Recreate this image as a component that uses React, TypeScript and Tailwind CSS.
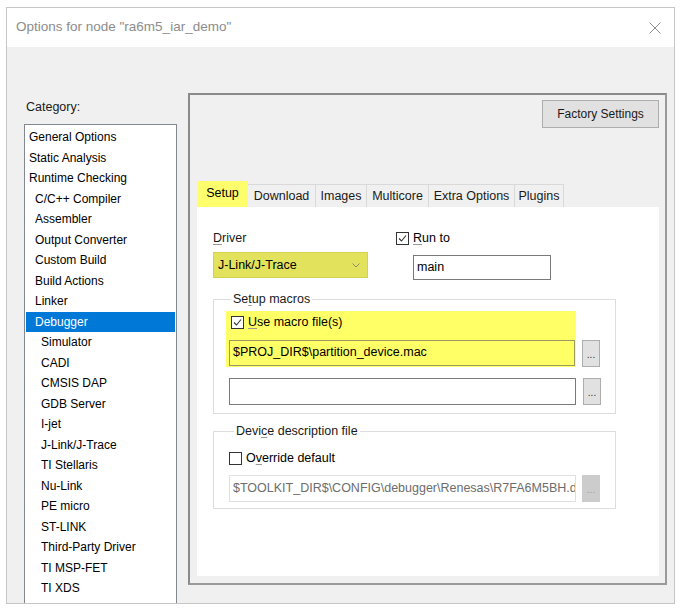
import React from "react"

const CATEGORIES: { label: string; level: number }[] = [
  { label: "General Options", level: 0 },
  { label: "Static Analysis", level: 0 },
  { label: "Runtime Checking", level: 0 },
  { label: "C/C++ Compiler", level: 1 },
  { label: "Assembler", level: 1 },
  { label: "Output Converter", level: 1 },
  { label: "Custom Build", level: 1 },
  { label: "Build Actions", level: 1 },
  { label: "Linker", level: 1 },
  { label: "Debugger", level: 1 },
  { label: "Simulator", level: 2 },
  { label: "CADI", level: 2 },
  { label: "CMSIS DAP", level: 2 },
  { label: "GDB Server", level: 2 },
  { label: "I-jet", level: 2 },
  { label: "J-Link/J-Trace", level: 2 },
  { label: "TI Stellaris", level: 2 },
  { label: "Nu-Link", level: 2 },
  { label: "PE micro", level: 2 },
  { label: "ST-LINK", level: 2 },
  { label: "Third-Party Driver", level: 2 },
  { label: "TI MSP-FET", level: 2 },
  { label: "TI XDS", level: 2 },
]

const TABS = [
  { label: "Setup", w: "w-[51px]" },
  { label: "Download", w: "w-[68px]" },
  { label: "Images", w: "w-[51px]" },
  { label: "Multicore", w: "w-[62px]" },
  { label: "Extra Options", w: "w-[86px]" },
  { label: "Plugins", w: "w-[49px]" },
]

function CheckBox({ checked }: { checked?: boolean }) {
  return (
    <span className="w-[13px] h-[13px] border border-[#333333] bg-white flex items-center justify-center shrink-0">
      {checked && (
        <svg width="9" height="9" viewBox="0 0 9 9">
          <path d="M1 4.5 L3.5 7 L8 1.5" fill="none" stroke="#333333" strokeWidth="1.1" />
        </svg>
      )}
    </span>
  )
}

function Dots({ disabled }: { disabled?: boolean }) {
  return (
    <div
      className={`w-[18px] h-[27px] flex items-end justify-center pb-[6px] text-[10px] leading-none ${
        disabled ? "bg-[#cccccc] border border-[#cccccc] text-[#a0a0a0]" : "bg-[#e1e1e1] border border-[#adadad] text-[#333333]"
      }`}
    >
      ...
    </div>
  )
}

export default function App() {
  return (
    <div className="w-[682px] h-[615px] bg-white overflow-hidden font-['Liberation_Sans',Arial,sans-serif] text-[12px] text-black">
      <div className="ml-[6px] mt-[7px] w-[669px] h-[597px] border border-[#c6c6c6] flex flex-col overflow-hidden">
        {/* title bar */}
        <div className="h-[39px] bg-white flex items-center justify-between pl-[9px] pr-[13px] shrink-0">
          <span className="text-[13.5px] text-[#8c8c8c]">Options for node "ra6m5_iar_demo"</span>
          <svg width="12" height="12" viewBox="0 0 12 12">
            <path d="M0.5 0.5 L11.5 11.5 M11.5 0.5 L0.5 11.5" stroke="#8c8c8c" strokeWidth="1" />
          </svg>
        </div>

        {/* body */}
        <div className="flex-1 bg-[#f0f0f0] flex min-h-0">
          {/* category column */}
          <div className="ml-[17px] w-[153px] flex flex-col min-h-0">
            <div className="mt-[51px] h-[18px] flex items-center pl-[2px] text-[12.5px] text-[#1a1a1a]">Category:</div>
            <div className="mt-[8px] flex-1 bg-white border border-[#828790] border-b-0 pt-[2px] px-[1px] overflow-hidden">
              {CATEGORIES.map((c) => {
                const sel = c.label === "Debugger"
                const pad = c.level === 0 ? "pl-[3px]" : c.level === 1 ? "pl-[9px]" : "pl-[15px]"
                return (
                  <div
                    key={c.label}
                    className={`h-[20.5px] flex items-center whitespace-nowrap ${pad} ${
                      sel ? "bg-[#0078d7] text-white" : "text-black"
                    }`}
                  >
                    {c.label}
                  </div>
                )
              })}
            </div>
          </div>

          {/* options panel */}
          <div className="ml-[11px] mt-[46px] mb-[18px] w-[479px] border-t-2 border-l-2 border-[#8a8a8a] border-r-2 border-b-2 border-r-[#9a9a9a] border-b-[#9a9a9a] flex flex-col pl-[7px] pr-[6px] pb-[7px]">
            <div className="flex justify-end mt-[5px]">
              <div className="w-[117px] h-[28px] bg-[#e1e1e1] border border-[#adadad] flex items-center justify-center text-[#1a1a1a]">
                Factory Settings
              </div>
            </div>

            {/* tabs */}
            <div className="mt-[53px] flex items-end h-[26px]">
              {TABS.map((t, i) =>
                i === 0 ? (
                  <div
                    key={t.label}
                    className={`${t.w} h-[26px] bg-[#ffff6e] flex items-center justify-center pb-[2px] text-[12.5px]`}
                  >
                    {t.label}
                  </div>
                ) : (
                  <div
                    key={t.label}
                    className={`${t.w} h-[23px] border border-[#d9d9d9] border-l-0 border-b-0 bg-[#f0f0f0] flex items-center justify-center text-[12.5px] text-[#1a1a1a]`}
                  >
                    {t.label}
                  </div>
                )
              )}
            </div>

            {/* tab page */}
            <div className="flex-1 bg-white pl-[16px] pt-[23px]">
              <div className="flex">
                <div className="w-[155px]">
                  <div className="h-[16px] flex items-center text-[12.5px] text-[#1a1a1a]">
                    <span className="underline underline-offset-2 decoration-[#999999]">D</span>river
                  </div>
                  <div className="mt-[6px] h-[26px] bg-[#e2e25c] border border-[#d2d250] flex items-center justify-between pl-[4px] pr-[7px] text-[12.5px]">
                    <span>J-Link/J-Trace</span>
                    <svg width="8" height="5" viewBox="0 0 8 5">
                      <path d="M0.5 0.5 L4 4 L7.5 0.5" fill="none" stroke="#909070" strokeWidth="1" />
                    </svg>
                  </div>
                </div>
                <div className="ml-[28px]">
                  <div className="h-[16px] flex items-center gap-[4px] text-[12.5px]">
                    <CheckBox checked />
                    <span>
                      <span className="underline underline-offset-2 decoration-[#999999]">R</span>un to
                    </span>
                  </div>
                  <div className="ml-[17px] mt-[9px] w-[138px] h-[25px] border border-[#7a7a7a] bg-white flex items-center pl-[3px] text-[12.5px]">
                    main
                  </div>
                </div>
              </div>

              {/* setup macros */}
              <fieldset className="mt-[10px] w-[403px] border border-[#dcdcdc] pl-[12px] pr-[14px] pb-[8px]">
                <legend className="ml-[5px] px-[2px] text-[12.5px] text-[#1a1a1a]">
                  Se<span className="underline underline-offset-2 decoration-[#999999]">t</span>up macros
                </legend>
                <div className="mt-[2px] w-[350px] h-[29px] bg-[#ffff66] pl-[5px] pt-[4px]">
                  <div className="h-[16px] flex items-center gap-[4px] text-[12.5px]">
                    <CheckBox checked />
                    <span>
                      <span className="underline underline-offset-2 decoration-[#999999]">U</span>se macro file(s)
                    </span>
                  </div>
                </div>
                <div className="flex items-center gap-[6px]">
                  <div className="w-[350px] bg-[#ffff66] pl-[3px] pr-[1px] pb-[1px]">
                    <div className="h-[26px] border border-[#9c9c60] bg-[#ffff66] flex items-center pl-[3px] text-[12.5px]">
                      $PROJ_DIR$\partition_device.mac
                    </div>
                  </div>
                  <Dots />
                </div>
                <div className="mt-[11px] flex items-center gap-[7px] pl-[3px]">
                  <div className="w-[347px] h-[27px] border border-[#7a7a7a] bg-white" />
                  <Dots />
                </div>
              </fieldset>

              {/* device description file */}
              <fieldset className="mt-[8px] w-[403px] border border-[#dcdcdc] pl-[15px] pr-[14px] pb-[6px]">
                <legend className="ml-[5px] px-[2px] text-[12.5px] text-[#1a1a1a]">
                  Devi<span className="underline underline-offset-2 decoration-[#999999]">c</span>e description file
                </legend>
                <div className="mt-[10px] h-[16px] flex items-center gap-[4px] text-[12.5px]">
                  <CheckBox />
                  <span>
                    O<span className="underline underline-offset-2 decoration-[#999999]">v</span>erride default
                  </span>
                </div>
                <div className="mt-[8px] flex items-center gap-[6px]">
                  <div className="w-[347px] h-[27px] border border-[#e0e0e0] bg-white flex items-center pl-[3px] text-[12.5px] text-[#6d6d6d] whitespace-nowrap overflow-hidden">
                    $TOOLKIT_DIR$\CONFIG\debugger\Renesas\R7FA6M5BH.dd
                  </div>
                  <Dots disabled />
                </div>
              </fieldset>
            </div>
          </div>
        </div>
      </div>
    </div>
  )
}
